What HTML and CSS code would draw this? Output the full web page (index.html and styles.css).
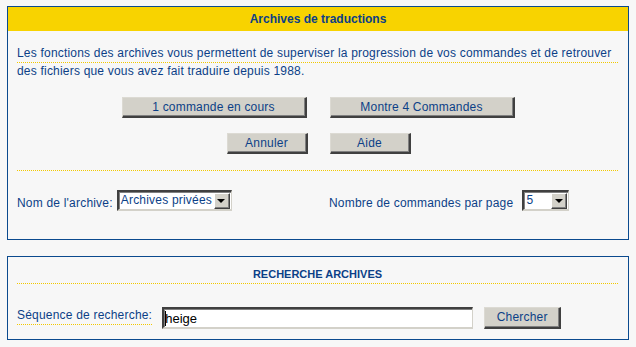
FILE: index.html
```html
<!DOCTYPE html>
<html lang="fr">
<head>
<meta charset="utf-8">
<title>Archives de traductions</title>
<link rel="stylesheet" href="styles.css">
</head>
<body>
<div class="panel panel-main">
  <div class="panel-head">Archives de traductions</div>
  <div class="panel-body">
    <div class="intro">
      <div class="intro-line dotted">Les fonctions des archives vous permettent de superviser la progression de vos commandes et de retrouver</div>
      <div class="intro-line">des fichiers que vous avez fait traduire depuis 1988.</div>
    </div>
    <div class="btn-row row-1">
      <button class="btn btn-wide" type="button">1 commande en cours</button>
      <button class="btn btn-wide" type="button">Montre 4 Commandes</button>
    </div>
    <div class="btn-row row-2">
      <button class="btn btn-small" type="button">Annuler</button>
      <button class="btn btn-small" type="button">Aide</button>
    </div>
    <div class="sep"></div>
    <div class="options">
      <div class="opt">
        <span class="label">Nom de l'archive:</span>
        <div class="fake-select sel-archive">
          <span class="sel-value">Archives privées</span>
          <span class="sel-arrow"><span class="tri"></span></span>
        </div>
      </div>
      <div class="opt">
        <span class="label">Nombre de commandes par page</span>
        <div class="fake-select sel-count">
          <span class="sel-value">5</span>
          <span class="sel-arrow"><span class="tri"></span></span>
        </div>
      </div>
    </div>
  </div>
</div>

<div class="panel panel-search">
  <div class="search-head dotted-line">RECHERCHE ARCHIVES</div>
  <div class="search-row">
    <span class="label search-label dotted-line">Séquence de recherche:</span>
    <div class="text-input"><span class="caret"></span>heige</div>
    <button class="btn btn-search" type="button">Chercher</button>
  </div>
</div>
</body>
</html>
```

FILE: styles.css
```css
* { box-sizing: border-box; }

html, body {
  margin: 0;
  background: #f7f7f7;
}

body {
  padding: 6px 0 0 7px;
  font-family: "Liberation Sans", Arial, sans-serif;
  font-size: 12px;
  letter-spacing: 0.2px;
  color: #0c3f87;
}

.panel {
  width: 622px;
  border: 1px solid #0b4a8e;
  background: #f7f7f7;
}

.panel-main {
  height: 234px;
}

.panel-head {
  height: 24px;
  background: #f8d300;
  text-align: center;
  font-weight: bold;
  font-size: 12px;
  letter-spacing: 0;
  line-height: 25px;
  color: #0c3f87;
}

.panel-body {
  padding: 0 9px;
}

.intro {
  margin-top: 14px;
}

.intro-line {
  line-height: 16px;
  white-space: nowrap;
}

.dotted,
.dotted-line {
  background-image: linear-gradient(to right, #f2c800 50%, transparent 50%);
  background-size: 2px 1px;
  background-repeat: repeat-x;
  background-position: left bottom;
}

.dotted {
  line-height: 17px;
  padding-bottom: 1px;
  margin-right: 1px;
}

.btn-row {
  display: flex;
  justify-content: center;
}

.row-1 {
  margin-top: 18px;
  gap: 23px;
}

.row-2 {
  margin-top: 15px;
  gap: 22px;
  padding-left: 1px;
}

.btn {
  font-family: "Liberation Sans", Arial, sans-serif;
  font-size: 12px;
  letter-spacing: 0.2px;
  color: #0c3f87;
  background: #d3d1c9;
  border: 0;
  border-top: 1px solid #dcdad3;
  border-left: 1px solid #dcdad3;
  border-right: 2px solid #404040;
  border-bottom: 2px solid #404040;
  box-shadow: inset -1px -1px 0 #808080;
  height: 21px;
  padding: 0;
  margin: 0;
  line-height: 17px;
}

.btn-wide { width: 185px; }
.btn-small { width: 81px; }

.sep {
  margin-top: 16px;
  height: 1px;
  margin-right: 1px;
  background-image: linear-gradient(to right, #f2c800 50%, transparent 50%);
  background-size: 2px 1px;
  background-repeat: repeat-x;
}

.options {
  display: grid;
  grid-template-columns: 312px 1fr;
  margin-top: 19px;
}

.opt {
  display: flex;
  align-items: center;
}

.label {
  line-height: 16px;
  padding-top: 4px;
}

.fake-select {
  display: flex;
  align-items: center;
  height: 21px;
  background: #ffffff;
  border-top: 2px solid #404040;
  border-left: 2px solid #404040;
  border-right: 1px solid #d3d1c9;
  border-bottom: 2px solid #d3d1c9;
  box-shadow: inset 1px 1px 0 #808080;
  padding: 0 1px 0 2px;
}

.sel-archive { width: 115px; margin-left: 4px; }
.sel-count { width: 47px; margin-left: 9px; }

.sel-value {
  flex: 1;
  white-space: nowrap;
  font-size: 12px;
  line-height: 14px;
  padding-bottom: 1px;
}

.sel-arrow {
  width: 16px;
  height: 16px;
  background: #d3d1c9;
  border-top: 1px solid #ffffff;
  border-left: 1px solid #ffffff;
  border-right: 1px solid #404040;
  border-bottom: 1px solid #404040;
  box-shadow: inset -1px -1px 0 #808080;
  display: flex;
  align-items: center;
  justify-content: center;
}

.tri {
  width: 0;
  height: 0;
  border-left: 4px solid transparent;
  border-right: 4px solid transparent;
  border-top: 4px solid #000000;
  margin-right: 1px;
}

.panel-search {
  margin-top: 16px;
  height: 84px;
  padding: 0 9px;
}

.search-head {
  text-align: center;
  font-weight: bold;
  font-size: 11px;
  letter-spacing: 0;
  line-height: 16px;
  padding-top: 9px;
  padding-bottom: 2px;
  margin-right: 1px;
}

.search-row {
  display: flex;
  align-items: flex-start;
  margin-top: 23px;
}

.search-label {
  padding-top: 0;
  padding-bottom: 1px;
  line-height: 17px;
  margin-top: 0;
}

.text-input {
  width: 311px;
  height: 22px;
  margin-left: 10px;
  background: #ffffff;
  border-top: 2px solid #404040;
  border-left: 2px solid #404040;
  border-right: 1px solid #d3d1c9;
  border-bottom: 2px solid #d3d1c9;
  box-shadow: inset 1px 1px 0 #808080;
  color: #000000;
  font-size: 13px;
  letter-spacing: 0;
  line-height: 17px;
  padding-left: 1px;
  display: flex;
  align-items: center;
}

.caret {
  width: 1px;
  height: 15px;
  background: #000000;
  margin-right: -1px;
}

.btn-search {
  width: 77px;
  height: 22px;
  margin-left: 11px;
}
```
